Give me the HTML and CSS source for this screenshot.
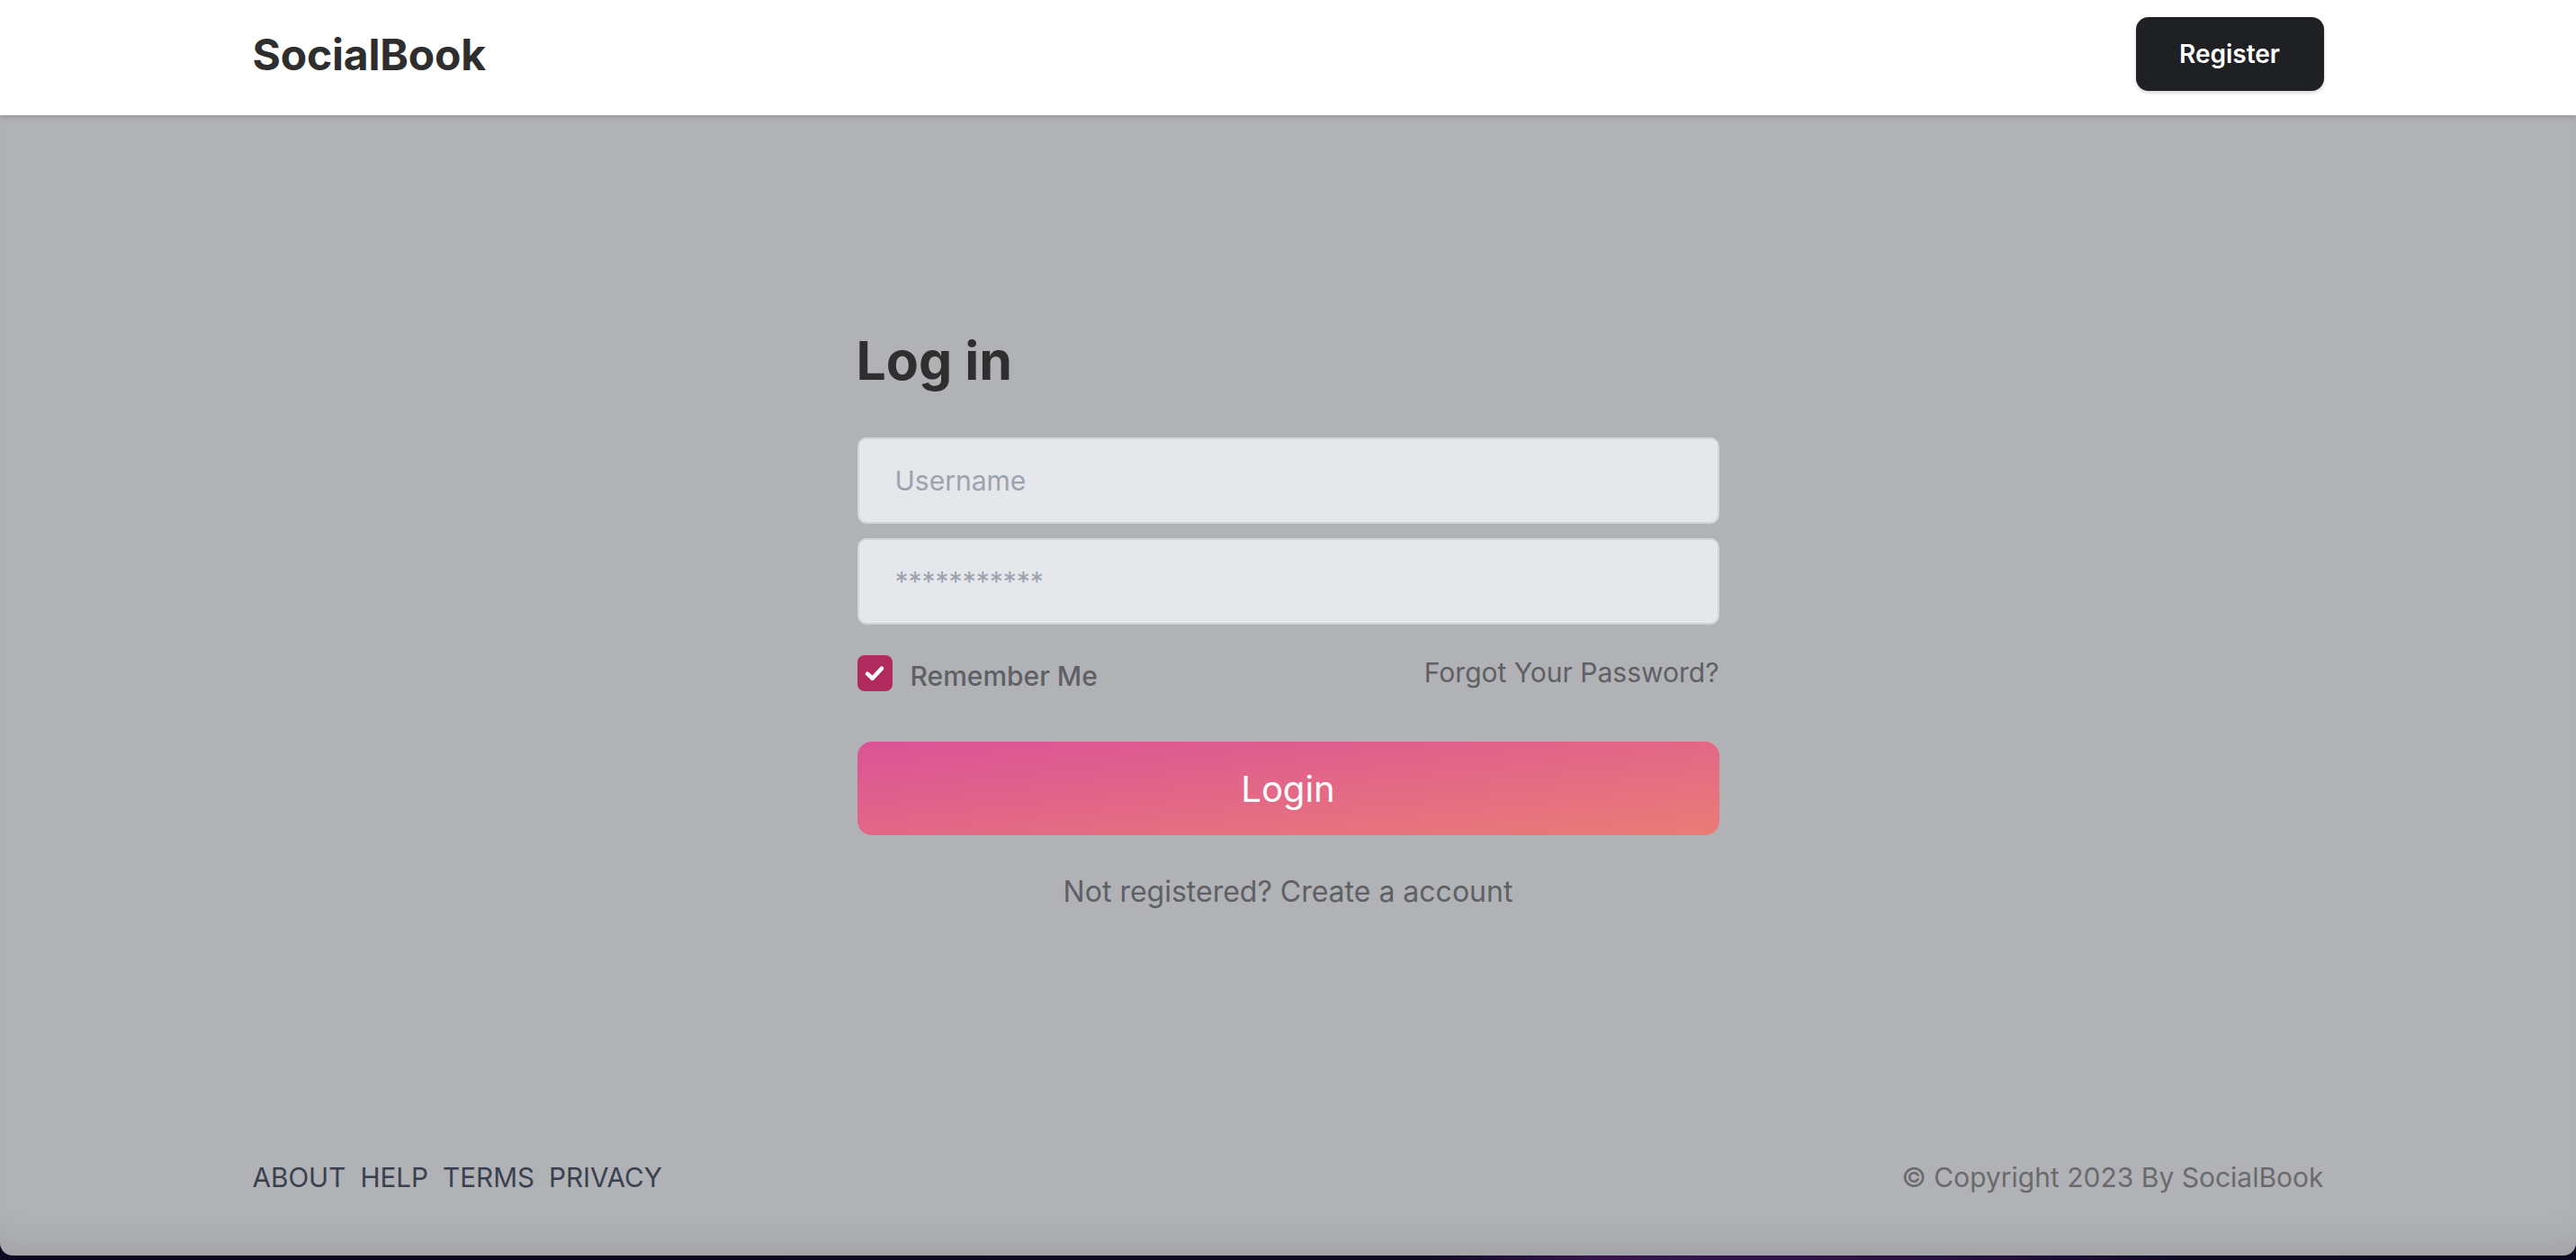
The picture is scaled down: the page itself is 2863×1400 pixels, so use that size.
FILE: index.html
```html
<!DOCTYPE html>
<html lang="en">
<head>
<meta charset="utf-8">
<title>SocialBook - Log in</title>
<link rel="stylesheet" href="styles.css">
</head>
<body>
<div class="page">
  <header class="topbar">
    <div class="container bar-inner">
      <a class="logo" href="#">SocialBook</a>
      <a class="btn-register" href="#">Register</a>
    </div>
  </header>
  <main class="main">
    <form class="login">
      <h1 class="title">Log in</h1>
      <input class="field" type="text" placeholder="Username">
      <input class="field field-pass" type="password" placeholder="***********">
      <div class="options">
        <label class="remember">
          <span class="check">
            <svg viewBox="0 0 24 24" width="32" height="32"><polyline points="6,12.5 10.2,16.3 18,8" fill="none" stroke="#fff" stroke-width="3.4" stroke-linecap="round" stroke-linejoin="round"/></svg>
          </span>
          <span class="remember-text">Remember Me</span>
        </label>
        <a class="forgot" href="#">Forgot Your Password?</a>
      </div>
      <button class="btn-login" type="button">Login</button>
      <p class="signup"><a href="#">Not registered? Create a account</a></p>
    </form>
  </main>
  <footer class="footer">
    <div class="container foot-inner">
      <nav class="foot-links">
        <a href="#">ABOUT</a>
        <a href="#">HELP</a>
        <a href="#">TERMS</a>
        <a href="#">PRIVACY</a>
      </nav>
      <p class="copy">© Copyright 2023 By SocialBook</p>
    </div>
  </footer>
</div>
</body>
</html>
```

FILE: styles.css
```css
html, body {
  margin: 0;
  padding: 0;
  height: 100%;
  overflow: hidden;
}
body {
  font-family: Inter, "Noto Sans", "Liberation Sans", sans-serif;
  background: linear-gradient(90deg, #0c0920 0%, #0f0a24 55%, #361450 62%, #2a1145 75%, #100a26 85%, #0c0920 100%);
}
a { text-decoration: none; color: inherit; }

.page {
  height: 1395px;
  background: #b1b2b6;
  border-radius: 0 0 14px 14px;
  display: flex;
  flex-direction: column;
  box-shadow: inset 0 -40px 40px -30px rgba(0,0,0,0.10);
  overflow: hidden;
}

.container {
  width: 2302px;
  margin: 0 auto;
}

.topbar {
  height: 128px;
  background: #ffffff;
  box-shadow: 0 2px 6px rgba(0,0,0,0.16);
  position: relative;
  z-index: 1;
  flex-shrink: 0;
}
.bar-inner {
  height: 120px;
  display: flex;
  align-items: center;
  justify-content: space-between;
}
.logo {
  font-size: 48px;
  font-weight: 700;
  color: #2e2e2f;
  letter-spacing: -0.2px;
}
.btn-register {
  width: 209px;
  height: 82px;
  display: flex;
  align-items: center;
  justify-content: center;
  background: #1f2024;
  color: #ffffff;
  font-size: 28px;
  font-weight: 600;
  border-radius: 14px;
  box-shadow: 0 2px 4px rgba(0,0,0,0.18);
}

.main {
  flex: 1;
  padding-top: 237px;
}
.login {
  width: 958px;
  margin: 0 auto;
  display: flex;
  flex-direction: column;
}
.title {
  margin: 0 0 49px -1px;
  font-size: 59px;
  line-height: 72px;
  font-weight: 700;
  color: #2f2f30;
}
.field {
  box-sizing: border-box;
  height: 96px;
  width: 100%;
  margin: 0;
  padding: 0 40px;
  background: #e5e7eb;
  border: 2px solid #d2d4d8;
  border-radius: 10px;
  font-family: inherit;
  font-size: 30px;
  color: #374151;
  outline: none;
}
.field::placeholder { color: #9ca3af; }
.field-pass { margin-top: 16px; }

.options {
  margin-top: 34px;
  display: flex;
  justify-content: space-between;
  align-items: center;
  height: 40px;
}
.remember {
  display: flex;
  align-items: center;
  gap: 20px;
}
.check {
  width: 39px;
  height: 40px;
  border-radius: 8px;
  background: #b12a5e;
  display: flex;
  align-items: center;
  justify-content: center;
}
.remember-text {
  font-size: 30px;
  font-weight: 500;
  color: #5e6065;
  margin-top: 6px;
}
.forgot {
  font-size: 30px;
  color: #5e6065;
  margin-top: -2px;
}

.btn-login {
  margin-top: 56px;
  height: 104px;
  border: none;
  border-radius: 16px;
  background: linear-gradient(to bottom right, #db5397, #ea7c76);
  color: #ffffff;
  font-family: inherit;
  font-size: 40px;
  font-weight: 400;
  cursor: pointer;
}
.signup {
  margin: 40px 0 0 0;
  text-align: center;
  font-size: 32px;
  line-height: 46px;
  color: #5e6065;
}

.footer {
  flex-shrink: 0;
  padding-bottom: 64px;
}
.foot-inner {
  display: flex;
  justify-content: space-between;
  align-items: center;
  line-height: 45px;
}
.foot-links {
  display: flex;
  gap: 16px;
  font-size: 29.7px;
  color: #394150;
}
.copy {
  margin: 0;
  font-size: 30px;
  color: #6a6a6d;
}
```
